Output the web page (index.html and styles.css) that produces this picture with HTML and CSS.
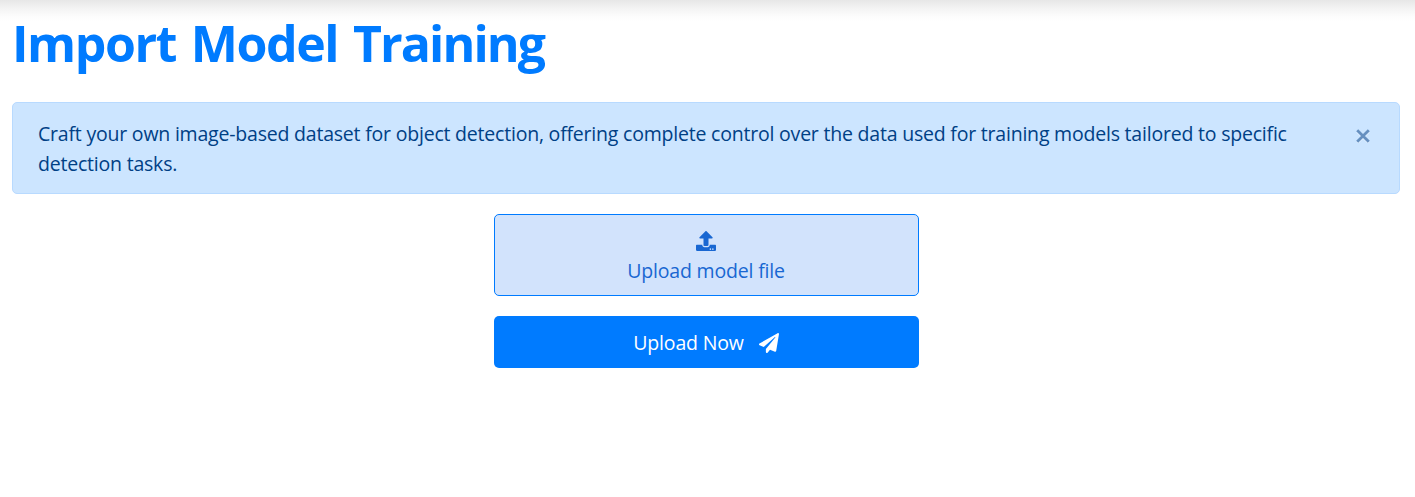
FILE: index.html
```html
<!DOCTYPE html>
<html lang="en">
<head>
<meta charset="utf-8">
<title>Import Model Training</title>
<link rel="stylesheet" href="styles.css">
</head>
<body>
<main class="page">
  <h1 class="title">Import Model <span class="title-end">Training</span></h1>
  <div class="alert" role="alert">
    <p class="alert-text">Craft your own image-based dataset for object detection, offering complete control over the data used for training models tailored to specific<br>detection tasks.</p>
    <button class="close" type="button" aria-label="Close">
      <svg viewBox="0 0 14 14" width="14" height="14"><path class="close-glow" d="M1.200 2.200l11.600 11.600M12.800 2.200l-11.600 11.600"/><path class="close-mark" d="M1.200 1.200l11.600 11.600M12.800 1.200l-11.600 11.600"/></svg>
    </button>
  </div>
  <form class="upload">
    <label class="dropzone">
      <svg class="upload-icon" viewBox="0 0 512 512" width="20" height="20" fill="currentColor"><path d="M296 384h-80c-13.300 0-24-10.700-24-24V192h-87.700c-17.800 0-26.700-21.500-14.100-34.100L242.300 5.700c7.500-7.500 19.800-7.500 27.300 0l152.200 152.200c12.600 12.600 3.700 34.100-14.100 34.100H320v168c0 13.300-10.700 24-24 24zm216-8v112c0 13.300-10.700 24-24 24H24c-13.300 0-24-10.700-24-24V376c0-13.300 10.700-24 24-24h136v8c0 30.900 25.100 56 56 56h80c30.900 0 56-25.100 56-56v-8h136c13.300 0 24 10.700 24 24zm-124 88c0-11-9-20-20-20s-20 9-20 20 9 20 20 20 20-9 20-20zm64 0c0-11-9-20-20-20s-20 9-20 20 9 20 20 20 20-9 20-20z"/></svg>
      <span class="dropzone-text">Upload model file</span>
    </label>
    <button class="submit" type="button"><span class="submit-text">Upload Now</span>
      <svg viewBox="0 0 512 512" width="20" height="20" fill="currentColor"><path d="M476 3.200L12.500 270.600c-18.100 10.400-15.800 35.600 2.200 43.200L121 358.400l287.300-253.200c5.500-4.900 13.300 2.600 8.600 8.300L176 407v80.500c0 23.600 28.500 32.900 42.500 15.800L282 426l124.600 52.200c14.200 6 30.400-2.900 33-18.200l72-432C515 7.800 493.300-6.800 476 3.200z"/></svg>
    </button>
  </form>
</main>
</body>
</html>
```
FILE: styles.css
```css
* { box-sizing: border-box; }
body {
  margin: 0;
  min-height: 100vh;
  background: linear-gradient(#e7e7e7, #f4f4f4 9px, #fdfdfd 17px, #fff 22px) top / 100% 22px no-repeat #fff;
  font: 370 19.500px/30px "Segoe UI", "Open Sans", "Noto Sans", sans-serif;
  letter-spacing: -0.170px;
}
.page { padding: 13px 15px 0 12px; }
.title {
  margin: 0 0 29px;
  font-size: 50px;
  line-height: 60px;
  font-weight: 700;
  letter-spacing: -1.450px;
  word-spacing: 3.300px;
  color: #007bff;
  white-space: nowrap;
}
.title-end { letter-spacing: -1.900px; }
.alert {
  display: flex;
  justify-content: space-between;
  align-items: flex-start;
  height: 92px;
  padding: 16px 29px 0 25px;
  border: 1px solid #b8daff;
  border-radius: 5px;
  background: #cce5ff;
  color: #004085;
}
.alert-text { margin: 0; white-space: nowrap; letter-spacing: -0.208px; }
.close {
  display: flex;
  margin: 10px 0 0;
  padding: 0;
  border: 0;
  background: none;
}
.close path { fill: none; stroke-width: 2.800; }
.close-glow { stroke: #e4f1ff; }
.close-mark { stroke: #6690c0; }
.upload {
  display: flex;
  flex-direction: column;
  gap: 20px;
  width: 425px;
  margin: 20px auto 0;
}
.dropzone {
  display: flex;
  flex-direction: column;
  align-items: center;
  height: 82px;
  padding-top: 16px;
  border: 1px solid #007bff;
  border-radius: 5px;
  background: #d2e3fc;
  color: #1967d2;
}
.dropzone-text { margin-top: 5px; }
.submit {
  display: flex;
  justify-content: center;
  align-items: center;
  gap: 15px;
  height: 52px;
  padding: 1px 0 0;
  border: 0;
  border-radius: 5px;
  background: #007bff;
  color: #fff;
  font: inherit;
  font-weight: 400;
  letter-spacing: inherit;
}
```
